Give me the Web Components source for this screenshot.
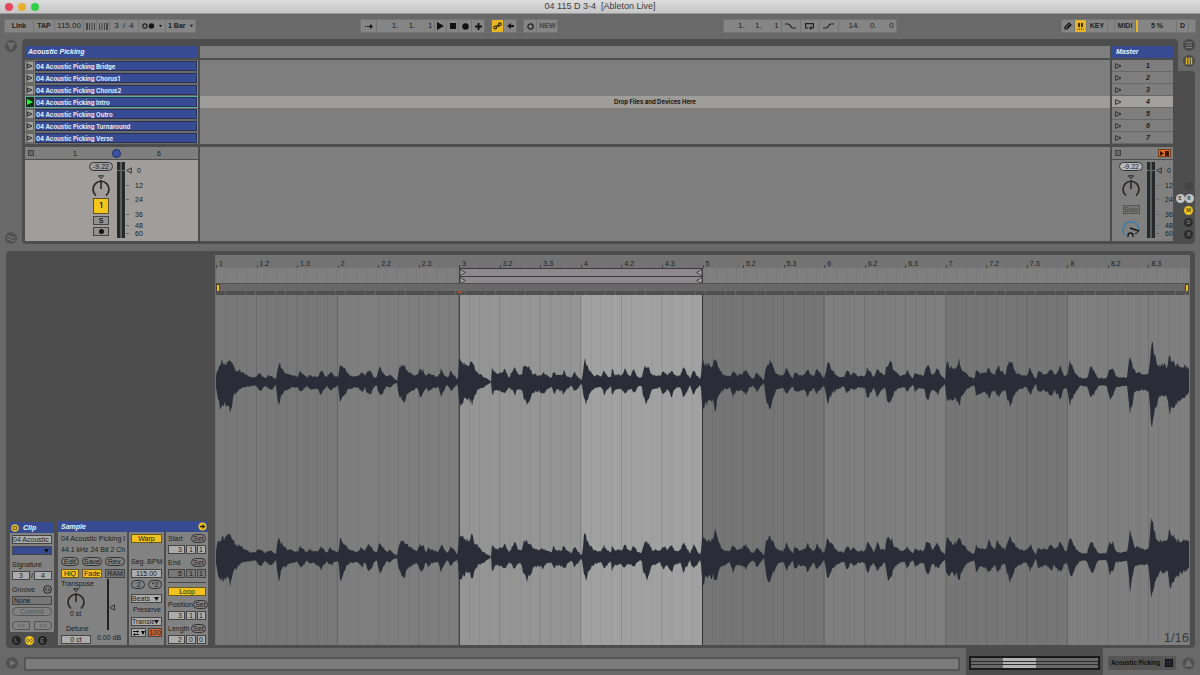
<!DOCTYPE html>
<html lang="en">
<head>
<meta charset="utf-8">
<title>04 115 D 3-4 [Ableton Live]</title>
<style>
html,body{margin:0;height:100%}
body{min-height:100vh;display:flex;flex-direction:column;background:#696969;color:#1c1c1c;font:7px/9px "Liberation Sans",Arial,sans-serif;overflow:hidden}
session-view{margin-bottom:7px}
detail-view{flex:1;min-height:0}
</style>
</head>
<body>
<title-bar></title-bar>
<transport-bar></transport-bar>
<session-view></session-view>
<detail-view></detail-view>
<status-bar></status-bar>
<script>
const BASE = `
*{box-sizing:border-box}
:host{display:block}
button,input,select{font:inherit;color:inherit;margin:0;padding:0;border:0;border-radius:0;background:none;min-width:0;appearance:none;outline:0}
button{display:flex;align-items:center;justify-content:center;white-space:pre}
svg{display:block;flex:none}
.row{display:flex;align-items:center}
`;
function define(name, css, html, ready) {
  customElements.define(name, class extends HTMLElement {
    connectedCallback() {
      if (this.shadowRoot) return;
      const root = this.attachShadow({mode: 'open'});
      root.innerHTML = `<style>${BASE}${css}</style>` + (typeof html === 'function' ? html(this) : html);
      if (ready) ready(root, this);
    }
  });
}

/* ---------- small controls ---------- */
define('ui-select', `
:host{display:grid;min-width:0}
select{grid-area:1/1;width:100%;height:100%;padding-left:var(--pad,2px);padding-right:7px;overflow:hidden;text-overflow:clip}
svg{grid-area:1/1;justify-self:end;align-self:center;margin-right:2px;pointer-events:none}`,
  el => `<select aria-label="${el.getAttribute('label')}"><option>${el.getAttribute('value')}</option></select>
  <svg width="${el.getAttribute('arrow') || 5}" height="4" viewBox="0 0 5 4"><path d="M0 0h5L2.500 4z" fill="#151515"/></svg>`);

define('pan-knob', `:host{display:block}`, el => {
  const ring = el.hasAttribute('cue');
  return ring
    ? `<svg width="20" height="20" viewBox="0 0 20 20" fill="none"><path d="M4 16A8 8 0 1 1 18 11" stroke="#3b7ba8" stroke-width="1.500"/><path d="M9 9l9 3" stroke="#171717" stroke-width="1.800"/><path d="M14 15q3-1 4-4" stroke="#171717"/><path d="M7 18v-1.500a2.500 2.500 0 0 1 5 0V18" stroke="#171717" stroke-width="1.300"/></svg>`
    : `<svg width="20" height="23" viewBox="0 0 20 23" fill="none"><path d="M7.500.8h5L10 3.500z" stroke="#222"/><path d="M5 20.500A8 8 0 1 1 15 20.500" stroke="#2a2624" stroke-width="1.700"/><path d="M10 5v9" stroke="#2a2624" stroke-width="1.600"/></svg>`;
});

/* ---------- window title ---------- */
define('title-bar', `
:host{display:grid;grid-template-columns:1fr auto 1fr;align-items:center;height:13px;background:linear-gradient(#dcdcdc,#c6c6c6);border-bottom:1px solid #999;color:#3c3c3c;font-size:9px;line-height:13px}
.lights{display:flex;gap:5px;padding-left:5px}
.lights button{width:8px;height:8px;border-radius:50%;background:#e8475a}
.lights button:nth-child(2){background:#e8ae2f}
.lights button:nth-child(3){background:#32cf4a}
h1{font:inherit;margin:0;white-space:pre}`,
`<div class="lights"><button aria-label="Close"></button><button aria-label="Minimise"></button><button aria-label="Zoom"></button></div><h1>04 115 D 3-4  [Ableton Live]</h1>`);

/* ---------- transport ---------- */
const ICON = {
  nudgeL: '<svg width="9" height="7" viewBox="0 0 9 7"><path d="M0 0h2v7H0zM3 0h1v7H3zM5.500 0h1v7h-1zM8 0h1v7H8z" fill="#444"/></svg>',
  nudgeR: '<svg width="9" height="7" viewBox="0 0 9 7"><path d="M0 0h1v7H0zM2.500 0h1v7h-1zM5 0h1v7H5zM7 0h2v7H7z" fill="#444"/></svg>',
  metro: '<svg width="13" height="6" viewBox="0 0 13 6"><circle cx="3" cy="3" r="2.200" fill="none" stroke="#1c1c1c" stroke-width="1.200"/><circle cx="9.500" cy="3" r="2.700" fill="#151515"/></svg>',
  follow: '<svg width="8" height="5" viewBox="0 0 8 5"><path d="M0 2h1v1H0zM2 2h3V0l3 2.500L5 5V3H2z" fill="#151515"/></svg>',
  play: '<svg width="7" height="8" viewBox="0 0 7 8"><path d="M0 0l7 4-7 4z" fill="#111"/></svg>',
  stop: '<svg width="6" height="6" viewBox="0 0 6 6"><path d="M0 0h6v6H0z" fill="#111"/></svg>',
  rec: '<svg width="7" height="7" viewBox="0 0 7 7"><circle cx="3.500" cy="3.500" r="3.200" fill="#111"/></svg>',
  plus: '<svg width="7" height="7" viewBox="0 0 7 7"><path d="M2.500 0h2v2.500H7v2H4.500V7h-2V4.500H0v-2h2.500z" fill="#111"/></svg>',
  auto: '<svg width="9" height="8" viewBox="0 0 9 8" fill="none" stroke="#3c2e00" stroke-width="1.200"><circle cx="2.200" cy="5.500" r="1.400"/><circle cx="6.800" cy="2.200" r="1.400"/><path d="M3.500 4.500l1-1 .8 1L6.500 3.500"/></svg>',
  back: '<svg width="7" height="6" viewBox="0 0 7 6"><path d="M0 3l4-3v2h3v2H4v2z" fill="#151515"/></svg>',
  ring: '<svg width="7" height="7" viewBox="0 0 7 7"><circle cx="3.500" cy="3.500" r="2.600" fill="none" stroke="#222" stroke-width="1.300"/></svg>',
  punchIn: '<svg width="11" height="6" viewBox="0 0 11 6"><path d="M0 1h3q1.500 0 2.500 2T8 5h3" fill="none" stroke="#222" stroke-width="1.200"/></svg>',
  loop: '<svg width="9" height="7" viewBox="0 0 9 7"><path d="M3 5H.6V.6h7.800V5H6" fill="none" stroke="#222" stroke-width="1.200"/><path d="M6.500 3v4L3.800 5z" fill="#222"/></svg>',
  punchOut: '<svg width="11" height="6" viewBox="0 0 11 6"><path d="M0 5h3q1.500 0 2.500-2T8 1h3" fill="none" stroke="#222" stroke-width="1.200"/></svg>',
  pencil: '<svg width="8" height="8" viewBox="0 0 8 8"><path d="M1 7V5l4-4 2 2-4 4zM3 6l3.500-3.500" fill="#777" stroke="#111" stroke-width="1.200"/></svg>',
  keys: '<svg width="7" height="7" viewBox="0 0 7 7"><path d="M1 0h2v4H1zM4 0h2v4H4z" fill="#3c2e00"/><path d="M0 6h1v1H0zM2 5h1v2H2zM4 5h1v2H4zM6 6h1v1H6z" fill="#7a6108"/></svg>'
};
define('transport-bar', `
:host{display:flex;justify-content:space-between;padding:6px 5px 7px;color:#222}
.set,.group{display:flex;gap:1px}
.set{gap:8px}
.group>*{height:12px;background:#858585;font-size:8px;line-height:12px;box-shadow:0 0 0 1px #757575}
.group>.b{font-size:7px;font-weight:bold}
.on{background:#e6b625!important}
.c10{width:11px}.c12{width:12px}.c15{width:15px}.c18{width:18px}.c20{width:20px}.c28{width:28px}
input.tempo{width:28px;text-align:center}
.pos{display:grid;grid-template-columns:repeat(3,17px);width:57px;justify-content:end;padding-right:2px}
.pos input{width:100%;text-align:right}
.sig{display:flex;width:28px;justify-content:space-evenly}
.sig input{width:7px;text-align:center}
.cpu{width:40px;border-left:2px solid #e6b625;text-align:center}`,
`<div class="group"><button class="b c28">Link</button><button class="b c20">TAP</button><input class="tempo" aria-label="Tempo" value="115.00"><button class="c12" aria-label="Nudge down">${ICON.nudgeL}</button><button class="c12" aria-label="Nudge up">${ICON.nudgeR}</button><div class="sig"><input aria-label="Numerator" value="3">/<input aria-label="Denominator" value="4"></div><button style="width:26px;gap:4px" aria-label="Metronome">${ICON.metro}<svg width="3" height="2" viewBox="0 0 3 2"><path d="M0 0h3L1.500 2z"/></svg></button><ui-select class="b" style="width:29px" label="Quantization" value="1 Bar" arrow="3"></ui-select></div>
<div class="set"><div class="group"><button class="c15" aria-label="Follow">${ICON.follow}</button><div class="pos"><input aria-label="Bar" value="1."><input aria-label="Beat" value="1."><input aria-label="Sixteenth" value="1"></div><button class="c10" aria-label="Play">${ICON.play}</button><button class="c10" aria-label="Stop">${ICON.stop}</button><button class="c12" aria-label="Record">${ICON.rec}</button><button class="c12" aria-label="Overdub">${ICON.plus}</button></div><div class="group"><button class="c10 on" aria-label="Automation arm">${ICON.auto}</button><button class="c12" aria-label="Re-enable automation">${ICON.back}</button></div><div class="group"><button class="c12" aria-label="Session record">${ICON.ring}</button><button class="b c20" style="color:#444">NEW</button></div></div>
<div class="group"><div class="pos"><input aria-label="Loop bar" value="1."><input aria-label="Loop beat" value="1."><input aria-label="Loop sixteenth" value="1"></div><button class="c18" aria-label="Punch in">${ICON.punchIn}</button><button class="c18" aria-label="Loop">${ICON.loop}</button><button class="c18" aria-label="Punch out">${ICON.punchOut}</button><div class="pos"><input aria-label="Length bars" value="14."><input aria-label="Length beats" value="0."><input aria-label="Length sixteenths" value="0"></div></div>
<div class="group"><button class="c12" aria-label="Draw">${ICON.pencil}</button><button class="c10 on" aria-label="Computer keyboard">${ICON.keys}</button><button class="b c20">KEY</button><button style="width:6px" aria-label="Key in"></button><button class="b c20">MIDI</button><div class="b cpu">5 %</div><button class="b c10">D</button><button style="width:6px" aria-label="MIDI out"></button></div>`);

/* ---------- session ---------- */
define('clip-slot', `
:host{display:flex;height:12px;padding:1px;gap:1px;background:#8c8a86;border-bottom:1px solid #6c6a68;border-top:1px solid #6c6a68}
:host([playing]){border-color:#5cb09c;box-shadow:inset 1px 0 #5cb09c,inset -1px 0 #5cb09c}
button{width:8px;height:10px;margin:-1px 0;background:#a3a19d;border:1px solid #666}
:host([playing]) button{background:#143018;border-color:#143018}
.name{flex:1;height:10px;margin:-1px 0;background:#374b93;border:1px solid #26315c;border-left:0;color:#e6e9f4;font:bold 6px/9px Inter,sans-serif;padding-left:1px}`,
 el => `<button aria-label="Launch"><svg width="6" height="6" viewBox="0 0 6 6">${el.hasAttribute('playing') ? '<path d="M0 0l6 3-6 3z" fill="#25f03e"/>' : '<path d="M.6.8L5 3 .6 5.200z" fill="#8a8886" stroke="#333"/>'}</svg></button><div class="name"><slot></slot></div>`);

define('track-mixer', `
:host{display:flex;height:81px;padding:2px 0 2px var(--left,64px);gap:var(--gap,4px)}
.controls{display:flex;flex-direction:column;align-items:center;width:24px}
.vol{width:24px;height:9px;border:1px solid #333;border-radius:5px;text-align:center;font-size:7px;line-height:7px}
pan-knob{margin:4px 0 0}
.act{width:16px;height:16px;background:#f4c61c;border:1px solid #5c5030;font:bold 7px/8px Inter,sans-serif}
.sm{width:16px;height:9px;margin-top:2px;background:#93918f;border:1px solid #444;font:bold 7px/7px "Liberation Sans",sans-serif}
.meter{width:8px;height:76px;background:linear-gradient(#6a6d6e,#6a6d6e) 0 8px/8px 1px no-repeat,linear-gradient(90deg,#262829 3px,#56605f 3px 5px,#262829 5px)}
.scale{display:grid;grid-template-columns:7px 12px;grid-template-rows:16px 14px 14px 16px 6px 10px;align-items:center;line-height:9px;font-size:7px}
.scale i{width:3px;height:1px;background:#666}
.scale span{text-align:center}
.solo{width:17px;height:9px;margin:7px 0 1px;border:1px solid #555;background:#767676;color:#444;font-size:7px;line-height:7px}
:host([master]) .vol{background:#b9b9b9}`,
 el => {
  const m = el.hasAttribute('master');
  return `<div class="controls"><input class="vol" aria-label="Volume" value="-9.22"><pan-knob></pan-knob>${m
   ? '<button class="solo">Solo</button><pan-knob cue></pan-knob>'
   : '<button class="act">1</button><button class="sm">S</button><button class="sm" aria-label="Arm"><svg width="5" height="5" viewBox="0 0 5 5"><circle cx="2.500" cy="2.500" r="2.500" fill="#111"/></svg></button>'}</div><div class="row" style="align-items:start;gap:1px"><div class="meter"></div><div class="scale"><svg width="6" height="7" viewBox="0 0 6 7"><path d="M5.300.8v5.400L.8 3.500z" fill="none" stroke="#333"/></svg><span>0</span>${[12,24,36,48,60].map(n => `<i></i><span>${n}</span>`).join('')}</div></div>`;
 });

const CLIPS = ['Bridge','Chorus1','Chorus2','Intro','Outro','Turnaround','Verse'];
const TRI = '<svg width="7" height="6" viewBox="0 0 7 6"><path d="M.6.6L6 3 .6 5.400z" fill="none" stroke="#333"/></svg>';
define('session-view', `
:host{display:grid;grid-template-columns:22px 1fr 17px;padding-right:5px}
.gutter{display:flex;flex-direction:column;justify-content:space-between;align-items:center}
.panel{display:grid;grid-template-columns:173px 1fr 61px;column-gap:2px;background:#4d4d4d;border-radius:4px 4px 0 4px;padding:7px 5px 3px 3px}
.col{display:flex;flex-direction:column}
h2{margin:0 0 2px;height:12px;padding-left:3px;background:#374b93;color:#eef0f8;font:italic bold 7px/12px "Liberation Sans",sans-serif}
.blank{height:12px;background:#7e7e7e;margin-bottom:2px}
.slots{height:84px;margin-bottom:3px;background:#7e7e7e}
.drop{margin-top:36px;height:12px;background:#9f9d9a;text-align:center;font:bold 6px/12px Inter,sans-serif;color:#181818}
.rest{flex:1;background:#7e7e7e}
.stop{display:grid;align-items:center;height:12px;margin-bottom:1px;background:#7e7e7e;padding:0 3px}
.track .stop{grid-template-columns:42px 42px 42px 1fr}
.sq{width:6px;height:6px;background:#666;border:1px solid #444}
.dot{width:9px;height:9px;border-radius:50%;background:#3a52a5;border:1px solid #222e5c}
.track track-mixer{background:#a09d9a}
.master track-mixer{background:#808080;--left:7px;--gap:4px}
.master h2{padding-left:4px}
.scene{display:grid;grid-template-columns:10px 1fr;align-items:center;width:100%;height:12px;padding:0 2px 0 3px;border-bottom:1px solid #686868;text-align:center;font:italic bold 7px/11px "Liberation Sans",sans-serif}
.scene.on{background:#a3a19e}
.master .stop{grid-template-columns:1fr 13px;padding:0 2px 0 3px}
.back{width:13px;height:8px;background:#e36c1f;border:1px solid #7a3a10}
.side{display:flex;flex-direction:column}
.tabs{height:32px;display:flex;flex-direction:column;align-items:center;gap:4px;padding-left:4px}
.io{flex:1;background:#4d4d4d;border-radius:0 4px 4px 0;display:flex;flex-direction:column;align-items:center;justify-content:end;gap:3px;padding:0 0 5px 4px;font:bold 5px/9px Inter,sans-serif}
.io button{width:9px;height:9px;border-radius:50%;background:#2c2c2c;color:#777}
.io .pill{background:#c4c4c4;color:#444}
.io .row{gap:0;margin-left:-8px}
.io .y{background:#ecc224;color:#6b5500}`,
`<div class="gutter"><button aria-label="Browser"><svg width="14" height="14" viewBox="0 0 14 14"><circle cx="7" cy="7" r="6" fill="#515151"/><path d="M3.500 4h7L7 10.500z" fill="#6c6c6c" stroke="#7c7c7c" stroke-width=".6"/></svg></button><button aria-label="Groove pool"><svg width="14" height="12" viewBox="0 0 14 12"><circle cx="7" cy="6" r="6" fill="#515151"/><path d="M3 5q2-2 4 0t4 0M3 8q2-2 4 0t4 0" fill="none" stroke="#7a7a7a"/></svg></button></div>
<div class="panel">
<section class="col track"><h2>Acoustic Picking</h2><div class="slots">${CLIPS.map(c => `<clip-slot${c === 'Intro' ? ' playing' : ''}>04 Acoustic Picking ${c}</clip-slot>`).join('')}</div><div class="stop"><button class="sq" aria-label="Stop clips"></button><span style="padding-left:3px">1</span><span class="dot"></span><span style="padding-left:3px">6</span></div><track-mixer></track-mixer></section>
<section class="col"><div class="blank"></div><div class="slots" style="display:flow-root"><div class="drop">Drop Files and Devices Here</div></div><div class="rest"></div></section>
<section class="col master"><h2>Master</h2><div class="slots">${CLIPS.map((c, i) => `<button class="scene${i === 3 ? ' on' : ''}">${TRI}<span>${i + 1}</span></button>`).join('')}</div><div class="stop"><button class="sq" aria-label="Stop all clips"></button><button class="back" aria-label="Back to arrangement"><svg width="9" height="5" viewBox="0 0 9 5"><path d="M0 0l4 2.500L0 5zM5 0h4v5H5z" fill="#3a1504"/></svg></button></div><track-mixer master></track-mixer></section>
</div>
<div class="side"><div class="tabs"><button aria-label="Arrangement"><svg width="12" height="12" viewBox="0 0 12 12"><circle cx="6" cy="6" r="6" fill="#4a4a4a"/><path d="M3 3.500h6M3 6h6M3 8.500h6" stroke="#7c7c7c"/></svg></button><button aria-label="Session"><svg width="12" height="12" viewBox="0 0 12 12"><circle cx="6" cy="6" r="6" fill="#4a4a4a"/><path d="M3.500 2.500v7M6 2.500v7M8.500 2.500v7" stroke="#dcb52a" stroke-width="1.400"/></svg></button></div>
<div class="io"><button aria-label="In/Out" style="background:#444"></button><div class="row"><button class="pill">S</button><button class="pill">R</button></div><button class="y">M</button><button>D</button><button>X</button></div></div>`);

/* ---------- clip boxes ---------- */
const BOX = `
.field{height:9px;line-height:7px;background:#acacac;border:1px solid #444;overflow:hidden;white-space:nowrap}
input.field{text-align:center}
.pill{height:9px;line-height:7px;border:1px solid #333;border-radius:5px}
.on{background:#f2c01f;border:1px solid #6b5a1c;height:9px;line-height:7px}
h3{margin:0;height:11px;background:#374b93;color:#eef0f8;font:italic bold 7px/11px "Liberation Sans",sans-serif;display:flex;align-items:center}
.grid{display:grid;gap:2px}
`;
define('clip-box', BOX + `
:host{width:44px;margin-bottom:13px;background:#828282}
h3{gap:4px;padding-left:1px}
.body{display:grid;gap:5px;padding:2px}
.two{display:grid;grid-template-columns:1fr 4px 1fr;text-align:center}
.sigs{margin-top:-1px}
.dim{color:#555;border-color:#555}`,
`<h3><svg width="8" height="8" viewBox="0 0 8 8"><circle cx="4" cy="4" r="3.800" fill="#e2b82c"/><path d="M2.500 2.500v3h3v-3z" fill="none" stroke="#5c4c10" stroke-width=".8"/></svg>Clip</h3>
<div class="body"><div class="grid"><input class="field" style="text-align:left;width:40px" aria-label="Clip name" value="04 Acoustic Picking Intro"><ui-select class="field" style="background:#374b93" label="Clip colour" value=" "></ui-select></div>
<div class="grid"><span>Signature</span><div class="two"><input class="field" style="width:100%" aria-label="Numerator" value="3">/<input class="field" style="width:100%" aria-label="Denominator" value="4"></div></div>
<div class="grid"><div class="row" style="justify-content:space-between"><span>Groove</span><button aria-label="Hot-swap groove"><svg width="9" height="9" viewBox="0 0 9 9" fill="none" stroke="#222"><circle cx="4.500" cy="4.500" r="3.900"/><path d="M3 6q-1-2 1-3.500M6 3q1 2-1 3.500" /></svg></button></div><button class="field" style="justify-content:start;background:#777;padding-left:1px">None</button><button class="pill dim">Commit</button></div>
<div class="two"><button class="pill dim" style="border-radius:4px 0 0 4px">&lt;&lt;</button><span></span><button class="pill dim" style="border-radius:0 4px 4px 0">&gt;&gt;</button></div></div>`);

const triple = (name, v, off) => `<div class="tri${off ? ' off' : ''}">${v.map((n, i) => `<input class="field" aria-label="${name} ${['bars','beats','sixteenths'][i]}" value="${n}">`).join('')}</div>`;
const pos = (name, v, off) => `<div class="grid"><div class="row lab"><span>${name}</span><button class="pill">Set</button></div>${triple(name, v, off)}</div>`;
define('sample-box', BOX + `
:host{width:150px;background:#828282}
h3{justify-content:space-between;padding:0 1px 0 3px}
.cols{display:grid;grid-template-columns:69px 35px 42px;gap:2px;background:#4d4d4d}
.cols>div{background:#828282;padding:2px;height:113px}
.a{display:flex;flex-direction:column;padding-left:3px!important}
.a p{margin:0 0 2px;white-space:nowrap}
.btns{display:grid;grid-template-columns:18px 20px 20px;gap:3px;margin-top:1px}
.off2{border:1px solid #444;background:#777;height:9px}
.lower{display:grid;grid-template-columns:34px 28px;margin-top:1px}
.k{display:flex;flex-direction:column;align-items:start}
.k pan-knob{margin-left:5px}
.g{display:flex;flex-direction:column;align-items:center;white-space:nowrap}
.gain{height:51px;width:12px;padding-bottom:19px;background:linear-gradient(#222,#222) 4px 0/2px 100% no-repeat;display:flex;align-items:end}
.b{display:flex;flex-direction:column;gap:2px;width:35px}
.b input{width:100%}
.c .lab{justify-content:space-between;height:9px}
.c .lab .pill{width:15px}
.c{display:flex;flex-direction:column;gap:4px}
.tri{display:grid;grid-template-columns:17px 10px 9px;gap:1px}
.tri input{text-align:right;padding-right:2px}
.tri.off input{background:#777}`,
`<h3>Sample<svg width="9" height="9" viewBox="0 0 9 9"><circle cx="4.500" cy="4.500" r="4" fill="#f0c022"/><path d="M2 3.800h2.500V2L7.300 4.500 4.500 7V5.200H2z" fill="#2a2200"/></svg></h3>
<div class="cols"><div class="a"><p>04 Acoustic Picking I</p><p>44.1 kHz 24 Bit 2 Ch</p>
<div class="btns"><button class="pill">Edit</button><button class="pill">Save</button><button class="pill">Rev.</button></div>
<div class="btns" style="margin-top:3px"><button class="on">HiQ</button><button class="on">Fade</button><button class="off2">RAM</button></div>
<div class="lower"><div class="k"><span>Transpose</span><pan-knob></pan-knob><span style="padding-left:9px;line-height:6px">0 st</span><span style="padding:7px 0 2px 5px">Detune</span><input class="field" style="width:30px" aria-label="Detune" value="0 ct"></div><div class="g"><div class="gain" role="slider" aria-label="Gain"><svg width="12" height="7" viewBox="0 0 12 7" style="margin-left:6px"><path d="M5.500.8v5.400L.9 3.500z" fill="none" stroke="#333"/></svg></div><span style="padding-top:3px">0.00 dB</span></div></div></div>
<div class="b"><button class="on">Warp</button><span style="padding-top:12px;line-height:10px;white-space:nowrap">Seg. BPM</span><input class="field" aria-label="Segment BPM" value="115.00"><div class="row" style="gap:3px"><button class="pill" style="width:14px">:2</button><button class="pill" style="width:14px">*2</button></div><ui-select class="field" style="--pad:0;margin-top:3px" label="Warp mode" value="Beats"></ui-select><span style="line-height:10px;padding-left:2px">Preserve</span><ui-select class="field" style="--pad:0" label="Preserve" value="Transients"></ui-select><div class="row" style="gap:2px"><button class="field" style="width:15px;gap:1px" aria-label="Transient loop mode"><svg width="12" height="6" viewBox="0 0 12 6"><path d="M0 1.500h4M2 4.500h4" stroke="#111"/><path d="M4 0l2 1.500L4 3zM2 3L0 4.500 2 6zM8 1h4l-2 4z"/></svg></button><button class="field" style="width:14px;background:#cf6438;color:#3a1504">100</button></div></div>
<div class="c">${pos('Start',[3,1,1])}${pos('End',[5,1,1],true)}<div style="border-top:1px solid #444"></div><button class="on">Loop</button>${pos('Position',[3,1,1])}${pos('Length',[2,0,0])}</div></div>`);

/* ---------- waveform ---------- */
// Envelope samples: x, top, bottom in source units (3 per pixel), centre line at 395.
const ENV = [
[205,'30,390,400 36,360,430 45,345,465 50,335,460 60,345,462 68,330,462 74,318,475 82,335,465 85,350,435 95,362,430 105,362,415 120,370,410 130,380,408 150,382,405 160,372,415 168,374,422 180,384,405 190,376,415 200,378,418 213,385,405 216,365,430 221,335,468 228,352,440 235,362,425 245,372,420 260,376,412 278,380,410 287,362,425 295,372,420 307,382,405 313,372,415 325,378,415 340,378,418 349,362,435 356,372,420 366,380,408 377,366,420 388,378,412 400,382,405 406,338,465 413,352,445 420,358,432 430,372,415 450,380,410 460,378,412 470,366,425 480,378,412 488,362,430 497,365,435 505,378,415 515,384,402 519,365,420 525,355,438 532,366,430 545,380,408 555,374,412 565,384,402 577,392,398 580,360,430 590,350,445 597,346,455 603,358,440 620,370,420 637,376,412 645,360,435 655,362,430 662,380,410 670,366,425 680,374,415 700,380,410 708,358,438 716,370,420 727,384,402 738,364,425 748,376,410 758,390,400 763,325,470 770,340,460 785,343,440 793,345,445 801,332,460 810,355,435 818,365,420 835,380,412 850,388,402 858,394,396 861,358,435 870,368,420 885,370,420 900,360,432 912,382,410 922,365,420 930,355,435 940,375,412 950,375,420 955,350,440 965,345,462'],
[530,'0,358,450 10,372,425 30,376,422 39,368,430 50,376,415 65,384,410 70,364,430 80,376,420 95,376,420 101,360,432 112,378,415 125,384,405 133,366,425 143,378,415 155,392,398 160,355,430 163,325,460 170,345,455 178,358,435 190,374,418 205,378,410 215,376,412 222,362,430 232,376,418 243,382,408 246,358,438 255,374,420 275,376,415 284,354,430 292,372,420 302,378,415 311,358,430 322,378,410 335,384,405 340,355,440 350,345,460 358,358,445 365,374,420 390,377,412 400,362,430 412,376,418 425,360,438 435,376,415 452,376,412 460,354,438 470,368,425 480,386,405 490,357,430 500,374,418 512,390,400 517,320,480 525,345,460 540,345,455 550,345,450 555,322,478 563,345,450 570,360,425 580,372,420 600,378,410 608,362,440 620,374,418 635,372,420 648,360,430 658,376,412 670,386,405 680,366,425 690,376,412 702,390,398 707,352,435 714,340,470 722,335,470 730,352,440 740,372,418 760,378,412 770,355,432 780,374,418 790,386,405 793,366,430 805,374,420 825,374,420 832,355,438 842,372,422 852,378,412 860,358,430 870,370,420 882,384,405 888,360,430 892,332,460 900,350,440 910,365,425 925,378,415 943,382,408 950,360,432 962,375,412 972,368,420 985,380,410'],
[860,'0,376,412 15,378,412 22,350,445 32,368,425 42,380,412 52,354,440 62,370,425 75,374,412 80,345,445 88,335,468 95,342,450 103,366,425 120,376,412 135,374,410 142,362,430 150,376,412 160,386,402 164,368,425 175,374,415 192,376,412 200,346,448 208,355,438 218,376,415 233,355,432 243,374,415 255,388,402 260,332,455 268,350,450 280,356,448 290,350,450 297,330,462 305,355,440 315,368,420 330,380,410 344,386,404 347,362,435 360,370,425 378,370,425 387,348,440 395,368,428 405,372,418 413,346,442 423,362,425 435,376,415 442,345,445 450,340,468 458,345,450 467,368,425 490,376,412 500,376,410 510,356,435 520,374,415 528,388,400 533,366,425 550,372,422 562,372,420 572,352,440 582,374,420 592,368,430 602,350,445 612,375,415 622,376,415 630,336,458 640,355,440 650,376,418 665,384,405 682,384,408 688,358,430 695,348,442 705,368,425 715,384,405 740,384,405 748,352,445 758,350,440 768,378,410 785,382,408 802,380,405 805,350,440 810,315,490 818,352,450 825,364,420 845,370,418 866,372,420 870,330,480 875,268,525 882,310,500 888,335,465 895,350,445 910,345,440 923,350,440 928,315,490 937,330,470 947,345,460 960,350,445 975,348,438 987,355,430']];
const PTS = ENV.flatMap(([o, s]) => s.split(' ').map(t => { const [x, a, b] = t.split(',').map(Number); return [o + x / 3 - 216, (395 - a) / 3, (b - 395) / 3]; })).sort((a, b) => a[0] - b[0]);
function wave(cy, seed) {
  let s = seed, i = 0; const up = [], dn = [];
  const rnd = () => (s = (s * 16807) % 2147483647) / 2147483647;
  for (let x = 0; x <= 973; x += 1) {
    while (i < PTS.length - 2 && PTS[i + 1][0] < x) i++;
    const p = PTS[i], q = PTS[i + 1], t = Math.max(0, Math.min(1, (x - p[0]) / (q[0] - p[0] || 1)));
    const a = p[1] + (q[1] - p[1]) * t, b = p[2] + (q[2] - p[2]) * t;
    up.push(`${x},${(cy - a * (.86 + rnd() * .34)).toFixed(1)}`);
    dn.unshift(`${x},${(cy + b * (.84 + rnd() * .34)).toFixed(1)}`);
  }
  return `<polygon points="${up.join(' ')} ${dn.join(' ')}" fill="#2a2d37"/>`;
}
define('wave-editor', `
:host{display:flex;flex-direction:column;background:#737373;padding-left:1px;padding-right:1px}
.ruler{display:grid;grid-template-columns:repeat(24,minmax(0,1fr));height:13px;padding-top:4px;font-size:7px;line-height:10px;color:#222}
.ruler span{padding-left:3px;background:linear-gradient(#444,#444) 0 100%/1px 4px no-repeat,linear-gradient(#666,#666) 50% 100%/1px 2px no-repeat}
.braces{display:grid;grid-template-columns:repeat(8,minmax(0,1fr));height:15px;background:repeating-linear-gradient(90deg,#7a7a7a 0 1px,#7f7f7f 1px 10px)}
.brace{grid-column:3/5;display:grid;grid-template-rows:7px 7px;gap:1px;background:#3c3a3c;border:1px solid #3c3a3c;border-bottom:0}
.brace div{display:flex;justify-content:space-between;background:#8d898c}
.marks{display:flex;justify-content:space-between;align-items:center;height:8px;border-top:1px solid #505050;background:#686868}
.marks i{width:4px;height:8px;background:#ecc020;border:1px solid #4d4424}
.trans{height:4px;background:linear-gradient(#a8502c,#a8502c) 25% 0/4px 2px no-repeat,repeating-linear-gradient(90deg,#505050 0 9px,#686868 9px 10px,#505050 10px 29px,#646464 29px 30px)}
.stage{flex:1;min-height:0;display:grid}
.stage svg{grid-area:1/1;width:100%;height:100%}
.res{grid-area:1/1;align-self:end;justify-self:end;font-size:13px;line-height:15px;color:#3a3a3a}`,
() => {
  const labels = Array.from({length: 24}, (_, i) => `<span>${Math.floor(i / 3) + 1}${i % 3 ? '.' + (i % 3 + 1) : ''}</span>`).join('');
  const W = 973 / 8, tones = ['#787878','#7e7e7e','#959595','#a1a1a1','#757575','#7e7e7e','#767676','#7f7f7f'];
  let g = tones.map((c, i) => `<rect x="${(i * W).toFixed(2)}" width="${(W + .5).toFixed(2)}" height="352" fill="${c}"/>`).join('');
  for (let k = 1; k < 96; k++) g += `<path d="M${(k * W / 12).toFixed(1)} 0V352" stroke="#000" stroke-opacity="${k % 12 === 0 ? .18 : k % 4 === 0 ? .11 : .06}"/>`;
  g += `<path d="M${2 * W} 0V352M${4 * W} 0V352" stroke="#333"/>`;
  const fwd = '<svg width="6" height="7" viewBox="0 0 6 7"><path d="M0 .5L5.500 3.500 0 6.500z" fill="#a5a2a4" stroke="#333" stroke-width=".8"/></svg>';
  const rev = '<svg width="6" height="7" viewBox="0 0 6 7"><path d="M6 .5L.5 3.500 6 6.500z" fill="#a5a2a4" stroke="#333" stroke-width=".8"/></svg>';
  return `<div class="ruler">${labels}</div><div class="braces"><div class="brace"><div>${fwd}${rev}</div><div>${fwd}${rev}</div></div></div><div class="marks"><i></i><i></i></div><div class="trans"></div><div class="stage"><svg viewBox="0 0 973 352" preserveAspectRatio="none">${g}${wave(87.5, 77)}${wave(263.5, 991)}</svg><div class="res">1/16</div></div>`;
});

define('detail-view', `
:host{display:flex;margin:0 5px 0 6px;padding:4px 5px 3px 4px;background:#4d4d4d;border-radius:4px}
.left{display:flex;align-items:end;gap:4px;width:205px;flex:none}
.clip{display:grid}
clip-box,.dots{grid-area:1/1}
.dots{align-self:end;display:flex;gap:4px;padding-left:2px;height:10px;align-items:center}
.dots button{width:9px;height:9px;border-radius:50%;background:#222}
.dots .y{background:#ecc224}
wave-editor{flex:1;min-width:0}`,
`<div class="left"><div class="clip"><clip-box></clip-box><div class="dots"><button aria-label="Launch box"><svg width="5" height="5" viewBox="0 0 5 5"><path d="M1 0v4h3" stroke="#666" fill="none"/></svg></button><button class="y" aria-label="Sample box"><svg width="7" height="5" viewBox="0 0 7 5"><path d="M0 2.500q1.800-3 3.500 0t3.500 0M0 2.500q1.800 3 3.500 0t3.500 0" stroke="#6b5500" fill="none" stroke-width=".8"/></svg></button><button aria-label="Envelopes box"><svg width="5" height="5" viewBox="0 0 5 5"><path d="M4 .5H1v4h3M1 2.500h2" stroke="#666" fill="none"/></svg></button></div></div><sample-box></sample-box></div><wave-editor></wave-editor>`);

/* ---------- status ---------- */
define('status-bar', `
:host{display:flex;align-items:center;height:27px;padding:0 5px}
.info{flex:1;height:14px;margin:4px 0 0 5px;background:#7b7b7b;border:2px solid #555}
.over{align-self:stretch;width:137px;margin:0 5px 0 6px;padding:8px 3px 5px;background:#4d4d4d}
.over div{height:14px;border:2px solid #1a1a1a;background:linear-gradient(90deg,transparent 32px,#b4b4b4 32px 65px,transparent 65px),#686868;display:flex;flex-direction:column;justify-content:space-evenly}
.over i{height:1px;background:#2c2c2c}
.dev{display:flex;align-items:center;justify-content:space-between;width:68px;height:14px;margin:3px 6px 0 0;padding:0 3px;background:#555;border-radius:2px;font:bold 6px/14px Inter,sans-serif;color:#111;white-space:nowrap}
.dev i{width:8px;height:8px;background:#23252e;border:1px solid #111}
.r{margin-top:3px}`,
`<button class="r" aria-label="Info view"><svg width="14" height="12" viewBox="0 0 14 12"><circle cx="7" cy="6" r="6" fill="#515151"/><path d="M5 3l5.500 3L5 9z" fill="#757575"/></svg></button><div class="info" role="status"></div><div class="over"><div><i></i><i></i></div></div><button class="dev">Acoustic Picking<i></i></button><button class="r" aria-label="Detail view"><svg width="13" height="13" viewBox="0 0 13 13"><circle cx="6.500" cy="6.500" r="6" fill="#515151"/><path d="M6.500 3l3.500 6H3z" fill="#6c6c6c" stroke="#808080" stroke-width=".6"/></svg></button>`);
</script>
</body>
</html>
